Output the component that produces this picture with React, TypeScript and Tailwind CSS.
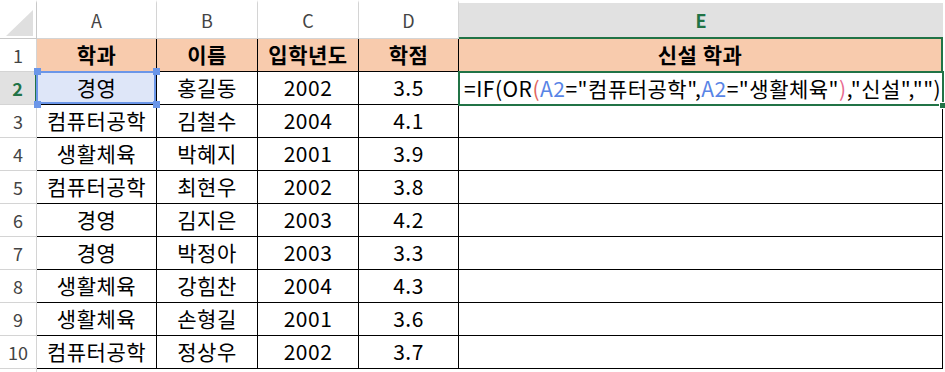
import React from 'react';

const font = { fontFamily: '"Noto Sans CJK KR", "Noto Sans", sans-serif' };

const rows: [string, string, string, string][] = [
  ['경영', '홍길동', '2002', '3.5'],
  ['컴퓨터공학', '김철수', '2004', '4.1'],
  ['생활체육', '박혜지', '2001', '3.9'],
  ['컴퓨터공학', '최현우', '2002', '3.8'],
  ['경영', '김지은', '2003', '4.2'],
  ['경영', '박정아', '2003', '3.3'],
  ['생활체육', '강힘찬', '2004', '4.3'],
  ['생활체육', '손형길', '2001', '3.6'],
  ['컴퓨터공학', '정상우', '2002', '3.7'],
];

const cols = 'grid grid-cols-[37px_120px_101px_101px_100px_484px]';
const cell =
  'flex items-center justify-center border-r border-b border-black text-[21px] tracking-[0.5px] text-black';
const rowHead =
  'flex items-center justify-center border-r border-b border-[#d4d4d4] text-[18px] text-[#444]';

const Handle = ({ className }: { className: string }) => (
  <span className={`absolute w-[7px] h-[7px] bg-[#6b96e8] ${className}`} />
);

const Formula = () => (
  <span className="whitespace-nowrap tracking-[0.5px]">
    =IF(OR<span className="text-[#e2655c]">(</span>
    <span className="text-[#5884e6]">A2</span>="컴퓨터공학",
    <span className="text-[#5884e6]">A2</span>="생활체육"
    <span className="text-[#e8698f]">)</span>,"신설","")
  </span>
);

const App = () => (
  <div className="w-[945px] h-[372px] overflow-hidden bg-white" style={font}>
    {/* column headers */}
    <div className={`${cols} h-[39px]`}>
      <div className="relative border-r border-b border-[#c8c8c8] border-t-[3px] border-t-white">
        <svg className="absolute left-[6px] top-[7px]" width="27" height="26">
          <polygon points="27,0 27,26 0,26" fill="#dfdfdf" />
        </svg>
      </div>
      {['A', 'B', 'C', 'D'].map((c) => (
        <div
          key={c}
          className="flex items-center justify-center border-r border-b border-[#d4d4d4] border-t-[3px] border-t-white text-[18px] text-[#444]"
        >
          {c}
        </div>
      ))}
      <div className="flex items-center justify-center bg-[#e1e1e1] border-b-2 border-[#217346] border-t-[3px] border-t-white text-[18px] font-bold text-[#217346]">
        E
      </div>
    </div>

    {/* row 1 */}
    <div className={`${cols} h-[33px]`}>
      <div className={rowHead}>1</div>
      {['학과', '이름', '입학년도', '학점'].map((t) => (
        <div key={t} className={`${cell} bg-[#f8cbad] font-bold`}>
          {t}
        </div>
      ))}
      <div className={`${cell} bg-[#f8cbad] font-bold border-r-2 border-r-[#217346]`}>
        신설 학과
      </div>
    </div>

    {/* row 2 */}
    <div className={`${cols} h-[33px]`}>
      <div className="flex items-center justify-center bg-[#e1e1e1] border-b border-[#d4d4d4] border-r-2 border-r-[#217346] text-[18px] font-bold text-[#217346]">
        2
      </div>
      <div className={`${cell} relative`}>
        <div className="absolute -left-[1px] -top-[1px] right-0 bottom-0 bg-[#dee6f8] border-2 border-[#6b96e8]" />
        <Handle className="-left-[3px] -top-[4px]" />
        <Handle className="-right-[4px] -top-[4px]" />
        <Handle className="-left-[3px] -bottom-[4px]" />
        <Handle className="-right-[4px] -bottom-[4px]" />
        <span className="relative">{rows[0][0]}</span>
      </div>
      <div className={cell}>{rows[0][1]}</div>
      <div className={cell}>{rows[0][2]}</div>
      <div className={cell}>{rows[0][3]}</div>
      <div className="relative flex items-center pl-[5px] text-[21px] text-black">
        <div className="absolute -left-[1px] -top-[1px] -right-[1px] bottom-[-1px] border-2 border-[#217346]" />
        <span className="absolute -right-[3px] -bottom-[4px] w-[7px] h-[7px] bg-[#217346] border border-white" />
        <Formula />
      </div>
    </div>

    {rows.slice(1).map((r, i) => (
      <div key={i} className={`${cols} h-[33px]`}>
        <div className={rowHead}>{i + 3}</div>
        {r.map((v, j) => (
          <div key={j} className={cell}>
            {v}
          </div>
        ))}
        <div className={cell} />
      </div>
    ))}

    <div className={`${cols} h-[33px]`}>
      <div className="border-r border-[#d4d4d4]" />
    </div>
  </div>
);

export default App;
